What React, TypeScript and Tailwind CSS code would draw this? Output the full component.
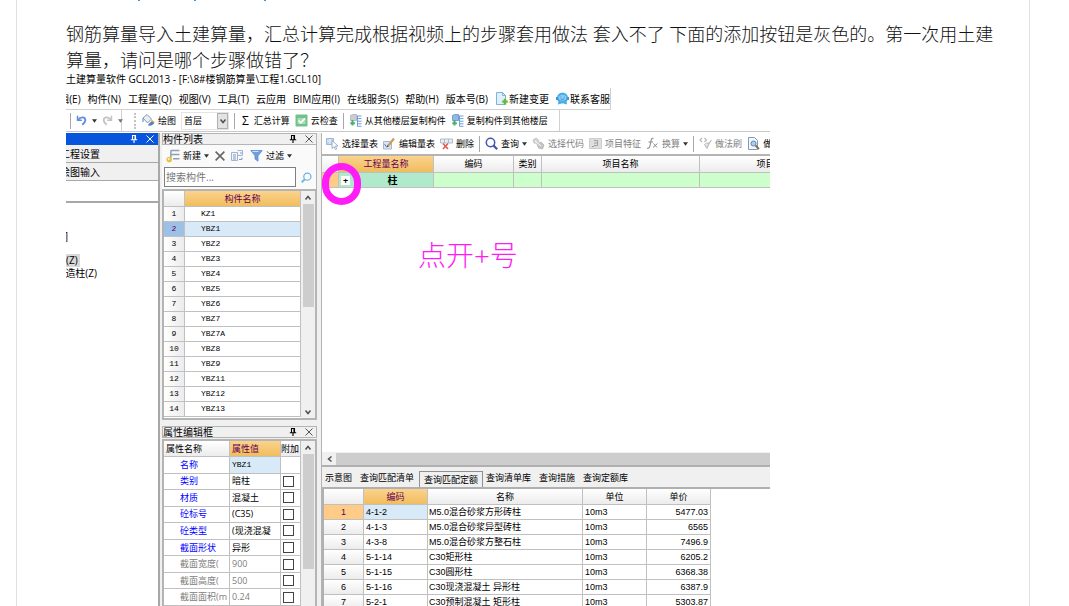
import React, { useState } from 'react';

interface Quota {
  code: string;
  name: string;
  price: string;
}

interface Property {
  name: string;
  value: string;
  kind: 'first' | 'public' | 'private';
}

const components = ['KZ1', 'YBZ1', 'YBZ2', 'YBZ3', 'YBZ4', 'YBZ5', 'YBZ6', 'YBZ7', 'YBZ7A', 'YBZ8', 'YBZ9', 'YBZ11', 'YBZ12', 'YBZ13'];

const properties: Property[] = [
  { name: '名称', value: 'YBZ1', kind: 'first' },
  { name: '类别', value: '暗柱', kind: 'public' },
  { name: '材质', value: '混凝土', kind: 'public' },
  { name: '砼标号', value: '(C35)', kind: 'public' },
  { name: '砼类型', value: '(现浇混凝', kind: 'public' },
  { name: '截面形状', value: '异形', kind: 'public' },
  { name: '截面宽度(', value: '900', kind: 'private' },
  { name: '截面高度(', value: '500', kind: 'private' },
  { name: '截面面积(m', value: '0.24', kind: 'private' },
];

const quotas: Quota[] = [
  { code: '4-1-2', name: 'M5.0混合砂浆方形砖柱', price: '5477.03' },
  { code: '4-1-3', name: 'M5.0混合砂浆异型砖柱', price: '6565' },
  { code: '4-3-8', name: 'M5.0混合砂浆方整石柱', price: '7496.9' },
  { code: '5-1-14', name: 'C30矩形柱', price: '6205.2' },
  { code: '5-1-15', name: 'C30圆形柱', price: '6368.38' },
  { code: '5-1-16', name: 'C30现浇混凝土 异形柱', price: '6387.9' },
  { code: '5-2-1', name: 'C30预制混凝土 矩形柱', price: '5303.87' },
];

const tabs = ['示意图', '查询匹配清单', '查询匹配定额', '查询清单库', '查询措施', '查询定额库'];

const menus = ['构件(N)', '工程量(Q)', '视图(V)', '工具(T)', '云应用', 'BIM应用(I)', '在线服务(S)', '帮助(H)', '版本号(B)'];

const Svg = ({ children, className = 'size-[13px]' }: { children: React.ReactNode; className?: string }) => (
  <svg viewBox="0 0 13 13" fill="none" aria-hidden="true" className={`shrink-0 ${className}`}>{children}</svg>
);

const Caret = ({ className = 'text-[#333]' }: { className?: string }) => (
  <svg viewBox="0 0 6 4" aria-hidden="true" className={`h-[4px] w-[5px] shrink-0 ${className}`}>
    <path d="M0 0h6L3 4z" fill="currentColor" />
  </svg>
);

const Chevron = ({ d }: { d: string }) => (
  <svg viewBox="0 0 8 8" fill="none" aria-hidden="true" className="size-2 shrink-0">
    <path d={d} stroke="#505050" strokeWidth="1.5" />
  </svg>
);

const NewFileIcon = () => (
  <Svg>
    <path d="M1.5.5h6l3 3v9h-9z" fill="#dff0fb" stroke="#7fb4da" />
    <path d="M7.5.5v3h3" stroke="#7fb4da" />
    <path d="M7.2 9.600h5.600M10 6.800v5.600" stroke="#67ba36" strokeWidth="2.400" />
  </Svg>
);

const ServiceIcon = () => (
  <Svg>
    <path d="M2.500 9l-.5 3.500 3.500-1zM10.500 9l.5 3.500-3.500-1z" fill="#47aeea" />
    <circle cx="6.500" cy="6" r="5.500" fill="#47aeea" />
    <path d="M0 5h2v3H0zM11 5h2v3h-2z" fill="#3a97d3" />
    <ellipse cx="6.500" cy="5.800" rx="3.800" ry="2.800" fill="#8fd0f5" />
    <path d="M4.400 5h1M7.600 5h1M4.600 6.800q1.900 1.200 3.800 0" stroke="#2580bd" strokeWidth=".8" />
  </Svg>
);

const UndoIcon = ({ flip = false }: { flip?: boolean }) => (
  <Svg className={flip ? 'size-[11px] -scale-x-100 text-[#c4c4c4]' : 'size-[11px] text-[#5f8fdd]'}>
    <path d="M1.800 1v5.300h5.200" stroke="currentColor" strokeWidth="1.800" />
    <path d="M2.400 5.800C5 2 10.600 1.600 11 5.800c.2 2.600-1.500 4-3.600 5.700" stroke="currentColor" strokeWidth="2.200" />
  </Svg>
);

const PaintIcon = () => (
  <Svg>
    <path d="M1 4l4-3.500 4.500 4.500-4 4z" fill="#e8eef7" stroke="#7d8ca4" strokeWidth=".9" />
    <path d="M1 4v4" stroke="#7da4d8" strokeWidth="1.400" />
    <path d="M6 11.500c1-3 3-3 4-5l2.500 2c-1 2.500-3 3.500-6.500 3z" fill="#4f84cb" />
    <path d="M9.500 6.500l2.500 2" stroke="#e2a53c" strokeWidth="1.500" />
  </Svg>
);

const CheckIcon = () => (
  <Svg>
    <rect x=".5" y=".5" width="12" height="12" rx="1" fill="#72c18b" />
    <path d="M2.500 4h8v6h-8z" fill="#a6dcb6" />
    <path d="M3.500 6.500l2.300 2.300 4.200-4.400" stroke="#fff" strokeWidth="1.600" />
  </Svg>
);

const FloorIcon = ({ blue = false }: { blue?: boolean }) => (
  <Svg>
    <path d="M1.500 1.500l2-1h4v6h-6z" fill={blue ? '#8eb8e6' : '#c9cdd2'} stroke={blue ? '#5786bd' : '#a6acb4'} strokeWidth=".7" />
    <path d="M3.500 6v5.500M1.300 9.300h4.600" stroke="#4bb06f" strokeWidth="2" />
    <path d="M8.700 2h3.800M8.700 4.600h3.800M8.700 7.200h3.800M8.700 9.800h3.800M8.700 12.300h3.800M8.500 1.500v11" stroke="#6c9fdc" />
  </Svg>
);

const SelectTableIcon = () => (
  <Svg>
    <path d="M.5 1.500h7v6h-7z" fill="#bcd5f0" stroke="#9db8d6" />
    <path d="M1 4h6M4 2v5" stroke="#e8f1fb" />
    <path d="M6 3.500l6 5.500-2.600.2 1.400 2.700-1.300.6-1.400-2.700L6 11.500z" fill="#fff" stroke="#8a9ab0" strokeWidth=".8" />
  </Svg>
);

const EditTableIcon = () => (
  <Svg>
    <path d="M.5 4.500h8v7.500h-8z" fill="#d8e7f6" stroke="#9db8d6" />
    <path d="M5 9l6-7.500" stroke="#cf9a5e" strokeWidth="2.200" />
    <path d="M4 8l2 1.500-2.500 1z" fill="#555" />
    <path d="M1.500 7l2 3" stroke="#5786bd" />
  </Svg>
);

const DeleteIcon = () => (
  <Svg>
    <path d="M.5 2h12v4H.5zM4.500 2v4M8.500 2v4" fill="#e6edf5" stroke="#aab6c4" strokeWidth=".9" />
    <path d="M3 6.500l5 5.500M8 6.500L3 12" stroke="#e5544b" strokeWidth="1.500" />
  </Svg>
);

const SearchIcon = ({ className = 'size-[13px] text-[#4758a8]' }: { className?: string }) => (
  <Svg className={className}>
    <circle cx="5.500" cy="5.500" r="4.200" stroke="currentColor" strokeWidth="1.500" />
    <path d="M8.600 8.600l3.600 3.600" stroke="currentColor" strokeWidth="2.200" />
  </Svg>
);

const CodeIcon = () => (
  <Svg>
    <path d="M1 3l3-2 3 2.500-1 3-4-.5z" fill="#d4d4d4" stroke="#bcbcbc" strokeWidth=".8" />
    <path d="M5 7l4-2 3 3-1.500 4-4-1z" fill="#c4c4c4" stroke="#b4b4b4" strokeWidth=".8" />
    <path d="M3 4l6 5" stroke="#fff" />
  </Svg>
);

const FeatureIcon = () => (
  <Svg>
    <path d="M.5 1.500h12v10H.5z" fill="#dedede" stroke="#cdcdcd" />
    <path d="M5 3.500h3.500v5H5M5 6h3M3 9.500h2" stroke="#a0a0a0" />
  </Svg>
);

const FxIcon = () => (
  <Svg>
    <path d="M7.500 1.500C5.500.5 5 3 4.500 6.500S3 12 1 11M2.500 5h4.500" stroke="#8c8c8c" strokeWidth="1.100" />
    <path d="M7.500 6.500l3.500 4M11.500 6.500L7 10.500" stroke="#8c8c8c" />
  </Svg>
);

const BrushIcon = () => (
  <Svg>
    <path d="M3 1L1 3l2 2M5.500 1l2 2-2 2" stroke="#b5b5b5" strokeWidth="1.100" />
    <path d="M5.500 7.500l2-1.500 2.500 1 2.500-4M5.500 7.500l2.500 4 2-4.500" fill="#dedede" stroke="#b8b8b8" />
  </Svg>
);

const PageSearchIcon = () => (
  <Svg>
    <path d="M1.500.5h6l3 3v9h-9z" fill="#f4f8fc" stroke="#8398b3" />
    <circle cx="6.500" cy="6.500" r="2.500" fill="#a8d0f2" stroke="#5786bd" />
    <path d="M8.500 8.500l3.500 3.500" stroke="#8b6b3d" strokeWidth="1.800" />
  </Svg>
);

const NewComponentIcon = () => (
  <Svg className="size-[14px]">
    <path d="M4.500 8V1.500M4.500 1.500h8M4.500 5.200h8M6.500 9h6" stroke="#8fa0b4" strokeWidth="1.400" />
    <circle cx="3" cy="9.800" r="2.600" fill="#e5c24c" />
    <circle cx="2.500" cy="9.200" r=".9" fill="#fff5c4" />
  </Svg>
);

const CopyIcon = () => (
  <Svg>
    <path d="M.5 3.500h6v8h-6zM6.500 1.500h5v5h-5" fill="#f2f6fc" stroke="#a4b4cf" />
    <path d="M2 6h3M2 8h3M2 10h3M9 4h2M8 10.500h3V8.500" stroke="#7f9cc8" />
  </Svg>
);

const FunnelIcon = () => (
  <Svg>
    <path d="M.8 1.500h11.400L8 6.800v5.400L5 10V6.800z" fill="#6f9fe0" stroke="#5a8bd0" strokeWidth=".8" />
    <path d="M2.500 2.500h6" stroke="#cfe1f5" />
  </Svg>
);

const PinIcon = () => (
  <svg viewBox="0 0 8 8" fill="none" aria-hidden="true" className="size-2">
    <path d="M2.500 4.500v-4h3v4M5 1v3.500M.8 4.700h6.400M4 5v3" stroke="currentColor" strokeWidth="1.100" />
  </svg>
);

const CloseIcon = ({ className = 'size-2', width = 1 }: { className?: string; width?: number }) => (
  <svg viewBox="0 0 8 8" fill="none" aria-hidden="true" className={className}>
    <path d="M.5.5l7 7M7.500.5l-7 7" stroke="currentColor" strokeWidth={width} />
  </svg>
);

const ToolButton = ({ icon, label, caret = false, disabled = false }: { icon: React.ReactNode; label: string; caret?: boolean; disabled?: boolean }) => (
  <button disabled={disabled} className="flex shrink-0 items-center gap-[3px] whitespace-nowrap disabled:text-[#808080]">
    {icon}
    <span>{label}</span>
    {caret && <Caret />}
  </button>
);

const Divider = () => <span className="h-4 w-px shrink-0 bg-[#a8a8a8]" />;

const PanelTitle = ({ title }: { title: string }) => (
  <div className="ml-[2px] flex h-3 items-center border border-[#b4b4b4] bg-[#f0f0f0] pr-[3px] text-[10px]">
    <h2 className="flex-1 leading-[10px]">{title}</h2>
    <button aria-label={`固定${title}`} className="mr-2"><PinIcon /></button>
    <button aria-label={`关闭${title}`} className="text-[#555]"><CloseIcon /></button>
  </div>
);

const headCell = 'border-r border-b border-[#c0c0c0] bg-linear-to-b from-white to-[#ececec] p-0 font-normal';
const activeHead = 'border-r border-b border-[#c0c0c0] bg-linear-to-b from-[#fbd38d] to-[#f0bd5c] p-0 font-normal text-[#660055]';
const bodyCell = 'border-r border-b border-[#c0c0c0] p-0';

const App: React.FC = () => {
  const [selected, setSelected] = useState(1);
  const [quota, setQuota] = useState(0);
  const [activeTab, setActiveTab] = useState('查询匹配定额');
  const [keyword, setKeyword] = useState('');

  return (
    <div className="h-screen overflow-hidden bg-white font-['Open_Sans','Noto_Sans_CJK_SC',sans-serif] text-black">
      <article className="mr-[39px] ml-4 flex h-full flex-col border-x border-[#e0e0e0] pr-[34px] pl-[49px]">
        <div className="flex h-[21px] shrink-0 items-start pl-[72px]" aria-hidden="true">
          <span className="mr-[54px] h-px w-[2px] bg-[#3a9bdc]" />
          <span className="mr-[68px] h-px w-[2px] bg-[#3a9bdc]" />
          <span className="h-px w-[2px] bg-[#3a9bdc]" />
        </div>
        <p className="shrink-0 text-[18px] leading-[26px] font-light text-[#111]">
          钢筋算量导入土建算量，汇总计算完成根据视频上的步骤套用做法 套入不了 下面的添加按钮是灰色的。第一次用土建算量，请问是哪个步骤做错了？
        </p>

        <section className="flex min-h-0 w-full max-w-[704px] flex-1 flex-col overflow-hidden text-[9px] leading-[14px]">
          <h1 className="h-[15px] shrink-0 text-[10px] leading-[13px] whitespace-nowrap">土建算量软件 GCL2013 - [F:\8#楼钢筋算量\工程1.GCL10]</h1>

          <nav className="flex h-[22px] w-[545px] shrink-0 items-center gap-[7px] border-r border-b border-[#d0d0d0] text-[10px] whitespace-nowrap">
            <button className="flex w-4 justify-end overflow-hidden">辑(E)</button>
            {menus.map(menu => (
              <button key={menu}>{menu}</button>
            ))}
            <button className="flex items-center gap-px"><NewFileIcon />新建变更</button>
            <button className="flex items-center gap-px"><ServiceIcon />联系客服</button>
          </nav>

          <div className="flex h-[22px] shrink-0 border-b border-[#c8c8c8]">
            <div className="flex w-[494px] items-center border-r border-[#d0d0d0]">
              <div className="flex h-full w-14 items-center gap-[5px] border-r border-[#d0d0d0] pl-1">
                <Divider />
                <button aria-label="撤销"><UndoIcon /></button>
                <Caret />
                <button aria-label="恢复"><UndoIcon flip /></button>
                <Caret className="text-[#777]" />
              </div>
              <span className="mr-[6px] ml-3 h-4 border-l-2 border-dotted border-[#c4c4c4]" />
              <div className="flex items-center gap-[5px]">
                <ToolButton icon={<PaintIcon />} label="绘图" />
                <div className="relative h-[18px] w-12 border border-[#e4e4e4]">
                  <select aria-label="楼层" className="size-full appearance-none pl-[2px] leading-[14px]">
                    <option>首层</option>
                    <option>第2层</option>
                  </select>
                  <span className="pointer-events-none absolute inset-y-0 right-0 flex w-[11px] items-center justify-center border border-[#b0b0b0] bg-[#e3e3e3]">
                    <Chevron d="M1.500 2.500L4 5.500l2.500-3" />
                  </span>
                </div>
                <Divider />
                <button className="flex items-center gap-[5px] pl-[2px]"><span className="text-[12px]">Σ</span>汇总计算</button>
                <ToolButton icon={<CheckIcon />} label="云检查" />
                <Divider />
                <ToolButton icon={<FloorIcon />} label="从其他楼层复制构件" />
                <ToolButton icon={<FloorIcon blue />} label="复制构件到其他楼层" />
              </div>
            </div>
          </div>

          <div className="flex min-h-0 flex-1 pt-px">
            <aside className="flex w-[94px] shrink-0 flex-col border-r-2 border-[#a8a8a8]">
              <div className="flex h-3 shrink-0 items-center justify-end gap-2 bg-[#0855dd] pr-1 text-white">
                <button aria-label="固定导航栏"><PinIcon /></button>
                <button aria-label="关闭导航栏"><CloseIcon /></button>
              </div>
              <button className="h-[18px] shrink-0 overflow-hidden border-b border-[#a8a8a8] bg-[#f0f0f0] text-left text-[10px]">
                <span className="-ml-[6px]">工程设置</span>
              </button>
              <button className="h-[18px] shrink-0 overflow-hidden border-b border-[#a8a8a8] bg-[#f0f0f0] text-left text-[10px]">
                <span className="-ml-[6px]">绘图输入</span>
              </button>
              <div className="h-[22px] shrink-0 border-b-2 border-[#a8a8a8]" />
              <ul className="flex flex-col items-start pt-[27px] text-[10px] leading-[13px]">
                <li className="flex h-6 w-[2px] justify-end">]</li>
                <li className="bg-[#d9d9d9] pr-[2px]">(Z)</li>
                <li className="flex w-[31px] justify-end overflow-hidden whitespace-nowrap">造柱(Z)</li>
              </ul>
            </aside>

            <div className="flex w-[161px] shrink-0 flex-col border-r-4 border-[#f0f0f0] bg-[#f0f0f0]">
              <PanelTitle title="构件列表" />
              <div className="ml-[2px] flex h-[21px] shrink-0 items-center gap-[6px] border-r border-[#b4b4b4] bg-[#fafafa] pl-1">
                <ToolButton icon={<NewComponentIcon />} label="新建" caret />
                <button aria-label="删除构件" className="text-[#666]"><CloseIcon className="size-[10px]" width={1.3} /></button>
                <button aria-label="复制构件"><CopyIcon /></button>
                <ToolButton icon={<FunnelIcon />} label="过滤" caret />
              </div>
              <div className="ml-[2px] flex h-[23px] shrink-0 items-start gap-1 border-r border-[#b4b4b4] bg-[#fafafa] pt-px pl-[2px]">
                <input
                  aria-label="搜索构件"
                  className="h-5 w-[132px] border border-[#808080] bg-white px-px text-[10px] placeholder:text-[#777]"
                  placeholder="搜索构件..."
                  value={keyword}
                  onChange={(e) => setKeyword(e.target.value)}
                />
                <button aria-label="搜索" className="flex h-5 w-3 items-center -scale-x-100"><SearchIcon className="size-[11px] text-[#6db5e4]" /></button>
              </div>

              <div className="ml-[2px] flex h-[231px] shrink-0 overflow-hidden border-2 border-[#b4b4b4]">
                <div className="min-w-0 flex-1 overflow-hidden bg-white">
                  <table className="w-full table-fixed border-separate border-spacing-0">
                    <thead>
                      <tr className="h-4">
                        <th className={`w-[21px] ${headCell}`} />
                        <th className={activeHead}>构件名称</th>
                      </tr>
                    </thead>
                    <tbody className="font-['Liberation_Mono','Noto_Sans_CJK_SC',monospace] text-[8px]">
                      {components.map((name, index) => (
                        <tr key={name} onClick={() => setSelected(index)}>
                          <td className={`text-center ${bodyCell} ${index === selected ? 'bg-[#9dc0e6] text-[#660055]' : 'bg-linear-to-r from-white to-[#ececec]'}`}>{index + 1}</td>
                          <td className={`pl-4 ${bodyCell} ${index === selected ? 'bg-[#d8e9f7]' : ''}`}>{name}</td>
                        </tr>
                      ))}
                    </tbody>
                  </table>
                </div>
                <div className="flex w-[14px] flex-col items-center">
                  <span className="flex h-[13px] items-center"><Chevron d="M1.500 5.500L4 2.500l2.500 3" /></span>
                  <span className="h-[103px] w-[11px] bg-[#cdcdcd]" />
                  <span className="mt-auto flex h-[13px] items-center"><Chevron d="M1.500 2.500L4 5.500l2.500-3" /></span>
                </div>
              </div>

              <div className="h-[6px] shrink-0" />
              <PanelTitle title="属性编辑框" />
              <div className="mt-px ml-[2px] flex min-h-0 flex-1 overflow-hidden border-2 border-b-0 border-[#b4b4b4]">
                <div className="min-w-0 flex-1 bg-white">
                  <table className="h-[165px] w-full table-fixed border-separate border-spacing-0">
                    <thead>
                      <tr className="h-4 text-left">
                        <th className={`w-[66px] ${headCell} pl-[2px]`}>属性名称</th>
                        <th className={`w-[51px] ${activeHead} pl-[2px]`}>属性值</th>
                        <th className={`overflow-hidden whitespace-nowrap ${headCell}`}>附加</th>
                      </tr>
                    </thead>
                    <tbody>
                      {properties.map(prop => (
                        <tr key={prop.name} className={prop.kind === 'private' ? 'text-[#808080]' : ''}>
                          <td className={`overflow-hidden pl-4 whitespace-nowrap ${bodyCell} ${prop.kind === 'private' ? '' : 'text-[#0000ff]'}`}>{prop.name}</td>
                          <td className={`overflow-hidden pl-[2px] whitespace-nowrap ${bodyCell} ${prop.kind === 'first' ? "bg-[#d8e9f7] font-['Liberation_Mono',monospace] text-[8px]" : ''}`}>{prop.value}</td>
                          <td className={`${bodyCell} pl-[2px]`}>
                            {prop.kind !== 'first' && (
                              <input type="checkbox" aria-label={`附加${prop.name}`} className="block size-[11px] appearance-none border border-[#444] bg-white checked:bg-[#444]" />
                            )}
                          </td>
                        </tr>
                      ))}
                    </tbody>
                  </table>
                </div>
                <div className="flex w-[14px] flex-col items-center">
                  <span className="flex h-[13px] items-center"><Chevron d="M1.500 5.500L4 2.500l2.500 3" /></span>
                  <span className="h-[115px] w-[11px] bg-[#cdcdcd]" />
                </div>
              </div>
            </div>

            <main className="flex min-w-0 flex-1 flex-col overflow-hidden border-l border-[#b4b4b4]">
              <div className="flex h-[21px] shrink-0 items-center gap-[5px] pl-1">
                <ToolButton icon={<SelectTableIcon />} label="选择量表" />
                <ToolButton icon={<EditTableIcon />} label="编辑量表" />
                <ToolButton icon={<DeleteIcon />} label="删除" />
                <Divider />
                <ToolButton icon={<SearchIcon />} label="查询" caret />
                <ToolButton icon={<CodeIcon />} label="选择代码" disabled />
                <ToolButton icon={<FeatureIcon />} label="项目特征" disabled />
                <ToolButton icon={<FxIcon />} label="换算" caret disabled />
                <Divider />
                <ToolButton icon={<BrushIcon />} label="做法刷" disabled />
                <ToolButton icon={<PageSearchIcon />} label="做" />
              </div>

              <div className="relative min-h-0 flex-1 overflow-hidden border-t-2 border-[#b4b4b4]">
                <table className="w-[528px] table-fixed border-separate border-spacing-0">
                  <thead>
                    <tr className="h-[17px]">
                      <th className={`w-[17px] ${headCell}`} />
                      <th className={`w-[95px] ${activeHead}`}>工程量名称</th>
                      <th className={`w-20 ${headCell}`}>编码</th>
                      <th className={`w-7 ${headCell}`}>类别</th>
                      <th className={`w-[158px] ${headCell}`}>项目名称</th>
                      <th className={headCell}>项目特征</th>
                    </tr>
                  </thead>
                  <tbody>
                    <tr className="bg-[#ccffcc]">
                      <td className={`bg-[#ffcc88] ${bodyCell}`} />
                      <td className={`bg-[#aeeacb] ${bodyCell}`}>
                        <div className="flex items-center pl-[2px]">
                          <button aria-label="展开" className="flex size-[9px] items-center justify-center bg-white leading-none font-bold">+</button>
                          <span className="flex-1 pl-[2px] text-center text-[10px] font-bold">柱</span>
                        </div>
                      </td>
                      <td className={bodyCell} />
                      <td className={bodyCell} />
                      <td className={bodyCell} />
                      <td className={bodyCell} />
                    </tr>
                  </tbody>
                </table>
                <span className="absolute top-[7px] left-0 h-[42px] w-[39px] rounded-full border-7 border-[#ff1cf7]" />
                <p className="absolute top-[81px] left-24 font-['Liberation_Serif','Noto_Sans_CJK_SC',serif] text-[28px] leading-[40px] font-light text-[#ff1cf7]">点开+号</p>
              </div>

              <div className="h-[154px] shrink-0 overflow-hidden">
                <div className="flex h-[13px] items-center bg-[#f0f0f0] pl-[2px]">
                  <span className="flex w-3 justify-center"><Chevron d="M5.500 1.500L2.500 4l3 2.500" /></span>
                  <span className="h-3 flex-1 bg-[#cdcdcd]" />
                </div>
                <div className="flex h-[24px] items-end border-t-2 border-b-2 border-[#b0b0b0] bg-[#f0f0f0] whitespace-nowrap">
                  {tabs.map(tab => (
                    <button
                      key={tab}
                      onClick={() => setActiveTab(tab)}
                      className={tab === activeTab ? 'h-4 border border-b-0 border-[#909090] px-1' : 'h-[18px] pr-[5px] pl-[3px]'}
                    >
                      {tab}
                    </button>
                  ))}
                </div>
                <div className="border-l-2 border-[#b0b0b0]">
                  <table className="w-[387px] table-fixed border-separate border-spacing-0">
                    <thead>
                      <tr className="h-4">
                        <th className={`w-10 ${headCell}`} />
                        <th className={`w-16 ${activeHead}`}>编码</th>
                        <th className={`w-[155px] ${headCell}`}>名称</th>
                        <th className={`w-16 ${headCell}`}>单位</th>
                        <th className={headCell}>单价</th>
                      </tr>
                    </thead>
                    <tbody className="font-['Liberation_Sans','Noto_Sans_CJK_SC',sans-serif]">
                      {quotas.map((row, index) => (
                        <tr key={row.code} onClick={() => setQuota(index)}>
                          <td className={`text-center ${bodyCell} ${index === quota ? 'bg-[#ffcc88] text-[#660055]' : 'bg-linear-to-b from-white to-[#ececec]'}`}>{index + 1}</td>
                          <td className={`pl-[2px] ${bodyCell} ${index === quota ? 'bg-[#d8e9f7]' : ''}`}>{row.code}</td>
                          <td className={`overflow-hidden pl-px whitespace-nowrap ${bodyCell}`}>{row.name}</td>
                          <td className={`pl-[2px] ${bodyCell}`}>10m3</td>
                          <td className={`pr-[2px] text-right ${bodyCell}`}>{row.price}</td>
                        </tr>
                      ))}
                    </tbody>
                  </table>
                </div>
              </div>
            </main>
          </div>
        </section>
      </article>
    </div>
  );
};

export default App;
